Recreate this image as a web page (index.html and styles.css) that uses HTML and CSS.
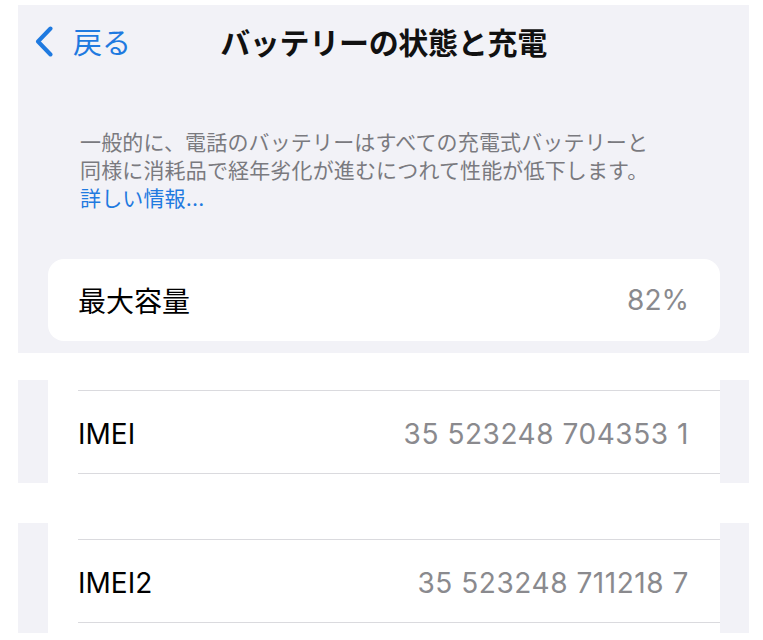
FILE: index.html
```html
<!DOCTYPE html>
<html lang="ja">
<head>
  <meta charset="UTF-8">
  <meta name="viewport" content="width=device-width, initial-scale=1.0">
  <title>バッテリーの状態と充電</title>
  <link rel="stylesheet" href="styles.css">
</head>
<body>

  <!-- Battery screen -->
  <section class="screen">
    <header class="nav">
      <a class="back" href="#">
        <svg class="chevron" width="18" height="31" viewBox="0 0 18 31">
          <path d="M15.5 2.5 L3 15.5 L15.5 28.5" fill="none" stroke="currentColor" stroke-width="4" stroke-linecap="round" stroke-linejoin="round"/>
        </svg>
        <span>戻る</span>
      </a>
      <h1 class="title">バッテリーの状態と充電</h1>
      <span></span>
    </header>

    <p class="note">
      一般的に、電話のバッテリーはすべての充電式バッテリーと<br>
      同様に消耗品で経年劣化が進むにつれて性能が低下します。<br>
      <a href="#">詳しい情報...</a>
    </p>

    <div class="card">
      <div class="row">
        <span class="label">最大容量</span>
        <span class="value">82%</span>
      </div>
    </div>
  </section>

  <!-- About screen, IMEI rows -->
  <section class="strip strip-imei">
    <div class="list">
      <div class="row lined">
        <span class="label">IMEI</span>
        <span class="value digits">35 523248 704353 1</span>
      </div>
    </div>
  </section>

  <section class="strip strip-imei2">
    <div class="list">
      <div class="row lined">
        <span class="label">IMEI2</span>
        <span class="value digits">35 523248 711218 7</span>
      </div>
    </div>
  </section>

</body>
</html>
```

FILE: styles.css
```css
body {
  font-family: Inter, "Noto Sans CJK JP", sans-serif;
  background-color: #fff;
  margin: 0;
  padding: 5px 0 0 18px;
  width: 731px;
  color: #000;
}
a {
  color: #1f7ae0;
  text-decoration: none;
}
.screen {
  background-color: #f2f2f7;
  padding-bottom: 12px;
}
.nav {
  display: grid;
  grid-template-columns: 1fr auto 1fr;
  align-items: center;
  height: 72px;
}
.back {
  display: flex;
  align-items: center;
  gap: 20px;
  padding-left: 17px;
  font-size: 29px;
  color: #1f7ae0;
}
.chevron {
  display: block;
}
.title {
  margin: 0;
  font-size: 30px;
  font-weight: 700;
  letter-spacing: -0.3px;
  color: #111;
}
.note {
  margin: 52px 0 0 62px;
  font-size: 21px;
  letter-spacing: 0.15px;
  line-height: 28px;
  color: #7a7a7f;
}
.card {
  background-color: #fff;
  border-radius: 16px;
  margin: 46px 29px 0 30px;
}
.row {
  display: flex;
  justify-content: space-between;
  align-items: center;
  height: 82px;
  padding: 0 31px 0 30px;
  font-size: 28px;
}
.label {
  color: #000;
}
.value {
  color: #8a8a8e;
}
.digits {
  letter-spacing: 0.55px;
}
.strip {
  background-color: #f2f2f7;
  padding: 0 29px 0 30px;
}
.list {
  background-color: #fff;
}
.strip-imei {
  margin-top: 27px;
}
.strip-imei .list {
  padding: 10px 0 9px;
}
.strip-imei2 {
  margin-top: 40px;
}
.strip-imei2 .list {
  padding: 16px 0 10px;
}
.lined {
  margin-left: 30px;
  padding-left: 0;
  padding-top: 3px;
  height: 79px;
  border-top: 1px solid #dadade;
  border-bottom: 1px solid #dadade;
}
```
